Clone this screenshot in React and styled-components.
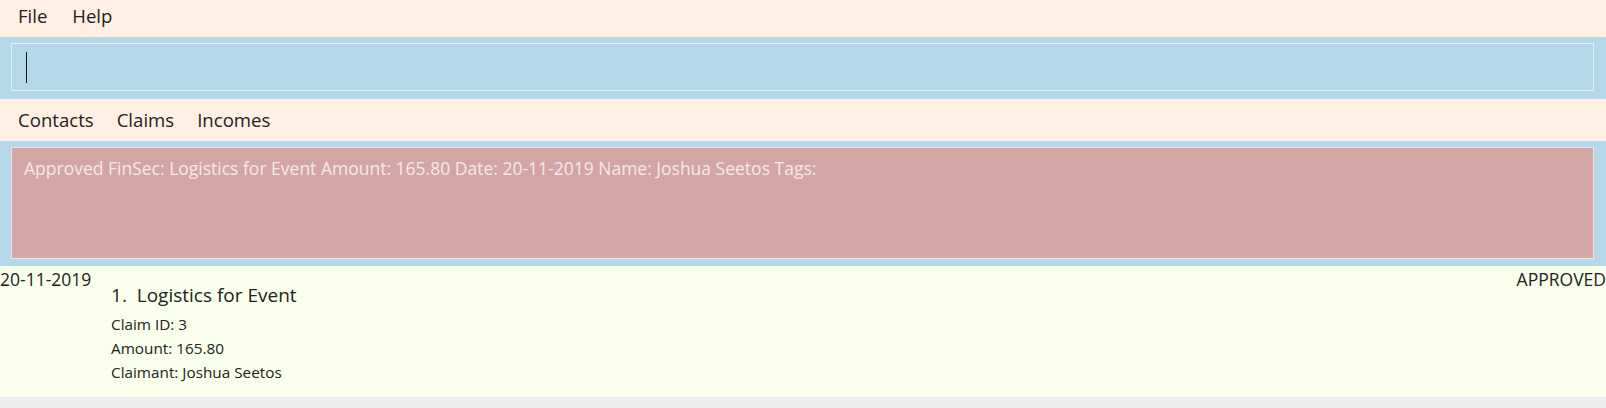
import React from 'react';
import styled, { createGlobalStyle } from 'styled-components';

const GlobalStyle = createGlobalStyle`
  html, body {
    margin: 0;
    padding: 0;
    background: #ececec;
  }
  body {
    font-family: "Open Sans", "Noto Sans", sans-serif;
    color: #222;
  }
`;

const claim = {
  index: 1,
  description: 'Logistics for Event',
  id: 3,
  amount: '165.80',
  date: '20-11-2019',
  claimant: 'Joshua Seetos',
  status: 'APPROVED',
};

function App() {
  return (
    <>
      <GlobalStyle />
      <Window>
        <MenuBar>
          <MenuItem>File</MenuItem>
          <MenuItem>Help</MenuItem>
        </MenuBar>
        <CommandPane>
          <CommandField>
            <Caret />
          </CommandField>
        </CommandPane>
        <TabBar>
          <Tab>Contacts</Tab>
          <Tab>Claims</Tab>
          <Tab>Incomes</Tab>
        </TabBar>
        <ResultPane>
          <ResultBox>
            Approved FinSec: {claim.description} Amount: {claim.amount} Date: {claim.date} Name:{' '}
            {claim.claimant} Tags:
          </ResultBox>
        </ResultPane>
        <ClaimCard>
          <DateLabel>{claim.date}</DateLabel>
          <Details>
            <Title>
              {claim.index}.&nbsp;&nbsp;{claim.description}
            </Title>
            <Field>Claim ID: {claim.id}</Field>
            <Field>Amount: {claim.amount}</Field>
            <Field>Claimant: {claim.claimant}</Field>
          </Details>
          <Status>{claim.status}</Status>
        </ClaimCard>
      </Window>
    </>
  );
}

const Window = styled.div`
  display: flex;
  flex-direction: column;
  width: 1606px;
`;

const MenuBar = styled.div`
  display: flex;
  align-items: center;
  gap: 25px;
  height: 37px;
  padding: 0 0 4px 18px;
  box-sizing: border-box;
  background: #fff0e3;
`;

const MenuItem = styled.span`
  font-size: 18.5px;
  line-height: 1;
`;

const CommandPane = styled.div`
  height: 62px;
  box-sizing: border-box;
  padding: 6px 12px 8px 11px;
  background: #b4d8e8;
`;

const CommandField = styled.div`
  height: 48px;
  box-sizing: border-box;
  border: 1px solid #e4eff4;
  display: flex;
  align-items: center;
  padding-left: 14px;
`;

const Caret = styled.span`
  width: 1px;
  height: 31px;
  background: #111;
`;

const TabBar = styled.div`
  display: flex;
  align-items: center;
  gap: 23px;
  height: 42px;
  padding-left: 18px;
  background: #fff0e3;
`;

const Tab = styled.span`
  font-size: 18.6px;
  line-height: 1;
`;

const ResultPane = styled.div`
  height: 125px;
  box-sizing: border-box;
  padding: 6px 12px 6px 11px;
  background: #b4d8e8;
`;

const ResultBox = styled.div`
  height: 112px;
  box-sizing: border-box;
  border: 1px solid #f0e4e4;
  background: #d3a5a5;
  color: #f7e9ea;
  font-size: 17.5px;
  padding: 8px 12px;
`;

const ClaimCard = styled.div`
  display: flex;
  height: 131px;
  background: #f9ffea;
`;

const DateLabel = styled.div`
  font-size: 17.5px;
  width: 111px;
  padding-top: 1px;
`;

const Details = styled.div`
  flex: 1;
  display: flex;
  flex-direction: column;
  padding-top: 17px;
`;

const Title = styled.div`
  font-size: 19px;
  line-height: 25px;
  margin-bottom: 4px;
`;

const Field = styled.div`
  font-size: 15.3px;
  line-height: 24px;
`;

const Status = styled.div`
  font-size: 17.5px;
  padding-top: 1px;
`;

export default App;
